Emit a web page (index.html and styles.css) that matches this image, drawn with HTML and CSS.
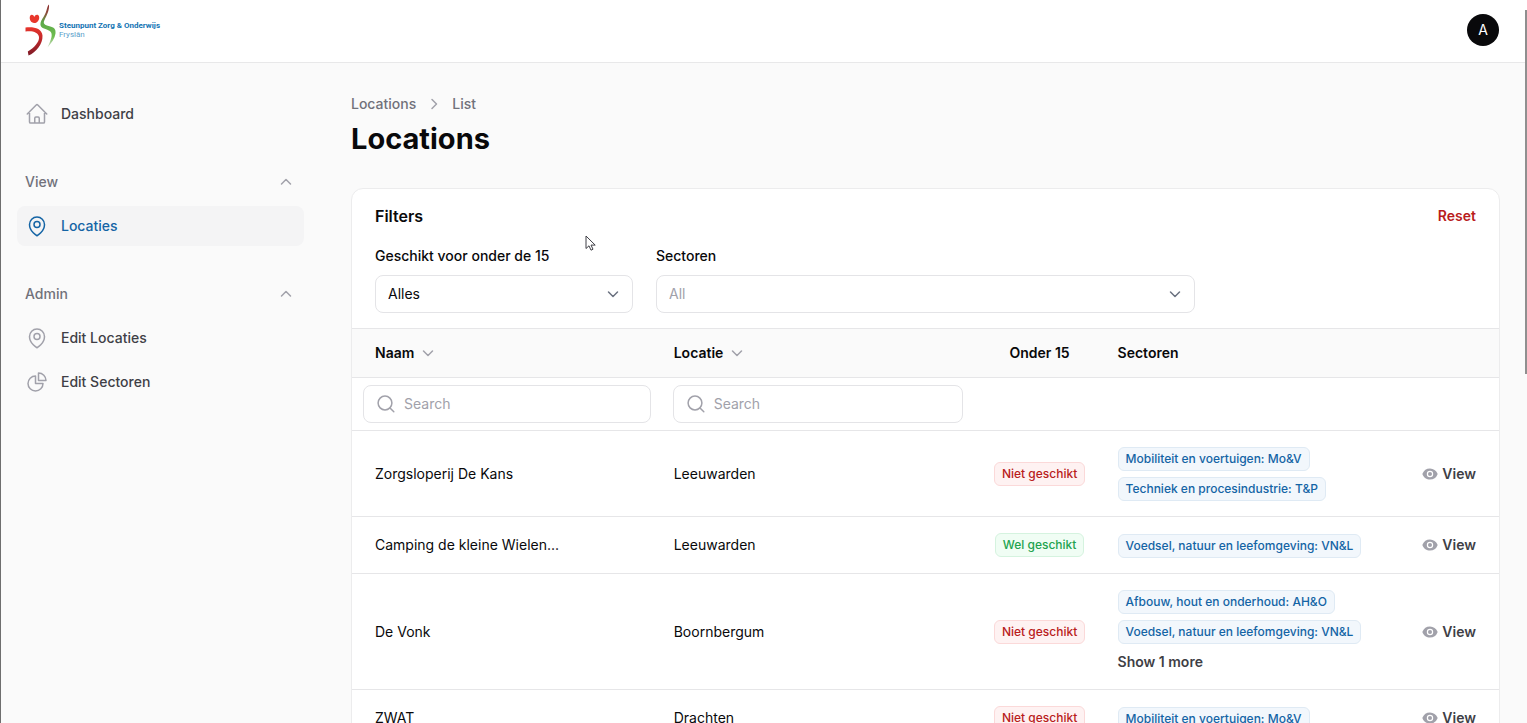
FILE: index.html
```html
<!DOCTYPE html>
<html lang="nl">
<head>
<meta charset="utf-8">
<meta name="viewport" content="width=device-width, initial-scale=1">
<title>Locations</title>
<link rel="stylesheet" href="styles.css">
</head>
<body>
<svg class="sprite" aria-hidden="true">
  <symbol id="home" viewBox="0 0 24 24"><path d="m2.25 12 8.954-8.955c.44-.439 1.152-.439 1.591 0L21.75 12M4.5 9.75v10.125c0 .621.504 1.125 1.125 1.125H9.75v-4.875c0-.621.504-1.125 1.125-1.125h2.25c.621 0 1.125.504 1.125 1.125V21h4.125c.621 0 1.125-.504 1.125-1.125V9.75M8.25 21h8.25"/></symbol>
  <symbol id="pin" viewBox="0 0 24 24"><path d="M15 10.5a3 3 0 1 1-6 0 3 3 0 0 1 6 0Z"/><path d="M19.5 10.5c0 7.142-7.5 11.25-7.5 11.25S4.5 17.642 4.5 10.5a7.5 7.5 0 1 1 15 0Z"/></symbol>
  <symbol id="pie" viewBox="0 0 24 24"><path d="M10.5 6a7.5 7.5 0 1 0 7.5 7.5h-7.5V6Z"/><path d="M13.5 10.5H21A7.5 7.5 0 0 0 13.5 3v7.5Z"/></symbol>
  <symbol id="up" viewBox="0 0 20 20"><path d="m5.5 12 4.5-4.5 4.5 4.500"/></symbol>
  <symbol id="down" viewBox="0 0 20 20"><path d="m5.5 8 4.5 4.5L14.500 8"/></symbol>
  <symbol id="right" viewBox="0 0 20 20"><path d="m8 5.500 4.500 4.500L8 14.500"/></symbol>
  <symbol id="search" viewBox="0 0 20 20"><circle cx="9" cy="9" r="6.900"/><path d="m14 14 3.800 3.800"/></symbol>
  <symbol id="eye" viewBox="0 0 20 20"><path d="M10 12.500a2.500 2.500 0 1 0 0-5 2.500 2.500 0 0 0 0 5Z"/><path fill-rule="evenodd" d="M.664 10.590a1.651 1.651 0 0 1 0-1.186A10.004 10.004 0 0 1 10 3c4.257 0 7.893 2.660 9.336 6.410.147.381.146.804 0 1.186A10.004 10.004 0 0 1 10 17c-4.257 0-7.893-2.660-9.336-6.410ZM14 10a4 4 0 1 1-8 0 4 4 0 0 1 8 0Z" clip-rule="evenodd"/></symbol>
</svg>

<header class="topbar">
  <a class="logo" href="#">
    <svg class="logo-mark" viewBox="0 0 32 54" aria-hidden="true">
      <defs>
        <linearGradient id="green" x1="0" y1="0" x2="0" y2="1"><stop offset="0" stop-color="#8c2a2c"/><stop offset=".2" stop-color="#8c4a3a"/><stop offset=".4" stop-color="#5da84a"/><stop offset=".75" stop-color="#6fbe4f"/><stop offset="1" stop-color="#d5ddd0"/></linearGradient>
        <linearGradient id="red" x1="0" y1="0" x2="0" y2="1"><stop offset="0" stop-color="#e8352c"/><stop offset=".4" stop-color="#c2292b"/><stop offset="1" stop-color="#7d1a26"/></linearGradient>
      </defs>
      <path fill="url(#green)" d="M24 1.500C21.800 3 22.500 8 18.500 14c-3.800 5.500-4.500 9.700.5 11.500 6 2 8.500 3.300 7.500 8.500-.9 4-2.500 7-4 10.500 4-4.500 7.200-9 8-14 .5-4.500-1.500-6.200-6-7.200-5-1.200-6.800-2.600-5-6.300C22 12 24.500 7 24 1.500Z"/>
      <path fill="#e8372c" d="M5 13c1.200-2 3.400-1.600 4.300 1 1-2.600 3.600-2.800 4.700-.8 1 3.300-1.500 6.900-4.800 6.800-3.200-.1-5.200-3.500-4.200-7Z"/>
      <path fill="url(#red)" d="M.5 24.500C8 23.500 17 25 17.500 32.500 18 41 11 49.500 3.500 52.500L2.800 48.500C9 45 14.500 39 14 34 13.500 29 7 27.500.5 28.500Z"/>
    </svg>
    <span class="logo-text"><b>Steunpunt Zorg &amp; Onderwijs</b><span>Fryslân</span></span>
  </a>
  <button class="avatar" type="button" aria-label="Account">A</button>
</header>

<div class="layout">
  <nav class="sidebar">
    <a class="nav-item" href="#"><svg class="icon"><use href="#home"/></svg>Dashboard</a>
    <section class="nav-group">
      <button class="group-head" type="button">View<svg class="chevron"><use href="#up"/></svg></button>
      <a class="nav-item active" href="#" aria-current="page"><svg class="icon"><use href="#pin"/></svg>Locaties</a>
    </section>
    <section class="nav-group">
      <button class="group-head" type="button">Admin<svg class="chevron"><use href="#up"/></svg></button>
      <a class="nav-item" href="#"><svg class="icon"><use href="#pin"/></svg>Edit Locaties</a>
      <a class="nav-item" href="#"><svg class="icon"><use href="#pie"/></svg>Edit Sectoren</a>
    </section>
  </nav>

  <main class="main">
    <div class="breadcrumbs"><a href="#">Locations</a><svg class="chevron"><use href="#right"/></svg><span>List</span></div>
    <h1>Locations</h1>

    <div class="card">
      <form class="filters">
        <div class="filters-head"><h2>Filters</h2><button class="reset" type="button">Reset</button></div>
        <div class="filter-grid">
          <div class="field">
            <label for="under15">Geschikt voor onder de 15</label>
            <div class="select"><select id="under15"><option>Alles</option></select><svg class="chevron"><use href="#down"/></svg></div>
          </div>
          <div class="field wide">
            <label for="sectors">Sectoren</label>
            <div class="select empty"><select id="sectors"><option>All</option></select><svg class="chevron"><use href="#down"/></svg></div>
          </div>
        </div>
      </form>

      <table>
        <colgroup><col class="col-name"><col class="col-place"><col class="col-age"><col><col class="col-action"></colgroup>
        <thead>
          <tr>
            <th><button class="sort" type="button">Naam<svg class="chevron"><use href="#down"/></svg></button></th>
            <th><button class="sort" type="button">Locatie<svg class="chevron"><use href="#down"/></svg></button></th>
            <th class="center">Onder 15</th><th>Sectoren</th><th></th>
          </tr>
          <tr class="search-row">
            <td><div class="search"><svg><use href="#search"/></svg><input type="search" placeholder="Search" aria-label="Search Naam"></div></td>
            <td><div class="search"><svg><use href="#search"/></svg><input type="search" placeholder="Search" aria-label="Search Locatie"></div></td>
            <td></td><td></td><td></td>
          </tr>
        </thead>
        <tbody>
          <tr>
            <td>Zorgsloperij De Kans</td><td>Leeuwarden</td>
            <td class="center"><span class="badge no">Niet geschikt</span></td>
            <td class="tags"><div class="stack"><span class="badge">Mobiliteit en voertuigen: Mo&amp;V</span><span class="badge">Techniek en procesindustrie: T&amp;P</span></div></td>
            <td class="action"><a class="view" href="#"><svg><use href="#eye"/></svg>View</a></td>
          </tr>
          <tr>
            <td>Camping de kleine Wielen...</td><td>Leeuwarden</td>
            <td class="center"><span class="badge yes">Wel geschikt</span></td>
            <td class="tags"><div class="stack"><span class="badge">Voedsel, natuur en leefomgeving: VN&amp;L</span></div></td>
            <td class="action"><a class="view" href="#"><svg><use href="#eye"/></svg>View</a></td>
          </tr>
          <tr>
            <td>De Vonk</td><td>Boornbergum</td>
            <td class="center"><span class="badge no">Niet geschikt</span></td>
            <td class="tags"><div class="stack"><span class="badge">Afbouw, hout en onderhoud: AH&amp;O</span><span class="badge">Voedsel, natuur en leefomgeving: VN&amp;L</span><button class="more" type="button">Show 1 more</button></div></td>
            <td class="action"><a class="view" href="#"><svg><use href="#eye"/></svg>View</a></td>
          </tr>
          <tr>
            <td>ZWAT</td><td>Drachten</td>
            <td class="center"><span class="badge no">Niet geschikt</span></td>
            <td class="tags"><div class="stack"><span class="badge">Mobiliteit en voertuigen: Mo&amp;V</span></div></td>
            <td class="action"><a class="view" href="#"><svg><use href="#eye"/></svg>View</a></td>
          </tr>
        </tbody>
      </table>
    </div>
  </main>
</div>
<div class="scroll-thumb"></div>
<svg class="pointer" viewBox="0 0 12 17" aria-hidden="true"><path d="M1 1v12.500l3-2.700 2 4.400 2-1-2-4.100h4.200Z"/></svg>
</body>
</html>
```
FILE: styles.css
```css
* { box-sizing: border-box; }
body {
  margin: 0;
  height: 100vh;
  overflow: hidden;
  border-left: 1px solid #6e6e6e;
  background: #fafafa;
  color: #09090b;
  font: 400 14px/20px Inter, "Liberation Sans", sans-serif;
}
a { color: inherit; text-decoration: none; }
button, input, select { font: inherit; color: inherit; margin: 0; }
button { padding: 0; border: 0; background: none; }
svg { flex: none; }
.sprite { position: absolute; width: 0; height: 0; }

.topbar {
  display: flex;
  align-items: center;
  justify-content: space-between;
  height: 63px;
  padding: 0 28px 3px 24px;
  background: #fff;
  border-bottom: 1px solid #e8e8e9;
}
.logo { display: flex; align-items: center; gap: 2px; }
.logo-mark { width: 32px; height: 54px; }
.logo-text {
  display: flex;
  flex-direction: column;
  font: 400 8px/9px Roboto, sans-serif;
  color: #5b9fcb;
}
.logo-text b { color: #1273b3; font-weight: 700; }
.avatar {
  width: 32px;
  height: 32px;
  border-radius: 50%;
  background: #09090b;
  color: #fff;
}

.layout { display: flex; align-items: flex-start; }
.sidebar { flex: none; width: 303px; padding: 31px 0 0 16px; }
.nav-item {
  display: flex;
  align-items: center;
  gap: 12px;
  height: 40px;
  padding: 0 8px;
  border-radius: 8px;
  color: #3f3f46;
  font-weight: 500;
}
.nav-item + .nav-item { margin-top: 4px; }
.nav-item.active { background: #f4f4f5; color: #1464a5; }
.icon { width: 24px; height: 24px; fill: none; stroke: #a1a1aa; stroke-width: 1.5; stroke-linecap: round; stroke-linejoin: round; }
.active .icon { stroke: #1464a5; }
.nav-group { margin-top: 36px; }
.group-head {
  display: flex;
  align-items: center;
  justify-content: space-between;
  width: 100%;
  height: 24px;
  margin-bottom: 12px;
  padding: 0 8px;
  color: #71717a;
  font-weight: 500;
}
.chevron { width: 20px; height: 20px; fill: none; stroke: #a1a1aa; stroke-width: 1.5; stroke-linecap: round; stroke-linejoin: round; }

.main { flex: 1; min-width: 0; padding: 32px 27px 0 47px; }
.breadcrumbs { display: flex; align-items: center; gap: 8px; height: 18px; color: #71717a; font-weight: 500; }
h1 { margin: 8px 0 31px; font-size: 29px; line-height: 36px; font-weight: 700; }
.card { overflow: hidden; border: 1px solid #ececed; border-radius: 12px; background: #fff; }
.filters { padding: 15px 23px; }
.filters-head { display: flex; justify-content: space-between; align-items: center; height: 24px; margin-bottom: 16px; }
h2 { margin: 0; font-size: 16px; line-height: 24px; font-weight: 600; }
.reset { color: #b91c1c; font-weight: 600; }
.filter-grid { display: grid; grid-template-columns: repeat(4, 1fr); gap: 23px; }
.wide { grid-column: span 2; }
.field label { display: block; margin-bottom: 7px; line-height: 24px; font-weight: 500; }
.select, .search {
  display: flex;
  align-items: center;
  height: 38px;
  border: 1px solid #e4e4e7;
  border-radius: 8px;
  background: #fff;
}
.select { position: relative; }
.select select { width: 100%; height: 100%; padding: 0 36px 0 12px; border: 0; background: none; appearance: none; }
.select.empty select { color: #a1a1aa; }
.select .chevron { position: absolute; right: 9px; pointer-events: none; stroke: #6b7280; }

table { width: 100%; border-collapse: separate; border-spacing: 0; table-layout: fixed; }
.col-name { width: 27%; }
.col-place { width: 27.2%; }
.col-age { width: 11.5%; }
.col-action { width: 95px; }
th, td { padding: 18px 12px; text-align: left; vertical-align: middle; border-top: 1px solid #e6e6e8; }
th { height: 49px; padding: 0 12px; background: #fafafa; font-weight: 600; }
th:first-child, td:first-child { padding-left: 23px; }
.search-row td, .search-row td:first-child { padding: 7px 11px; }
.sort { display: flex; align-items: center; gap: 4px; font-weight: 600; }
th.center, td.center { padding: 0; text-align: center; }
.search { gap: 8px; padding: 0 12px; }
.search svg { width: 20px; height: 20px; fill: none; stroke: #a1a1aa; stroke-width: 1.5; stroke-linecap: round; }
.search input { flex: 1; min-width: 0; padding: 0; border: 0; outline: 0; background: none; }
.search input::placeholder { color: #a1a1aa; opacity: 1; }
td.tags { padding: 16px 12px 15px; }
td.center { line-height: 0; }
.stack { display: flex; flex-direction: column; align-items: flex-start; gap: 6px; }
.badge {
  display: inline-block;
  height: 24px;
  padding: 0 7px;
  border: 1px solid #dfeaf4;
  border-radius: 6px;
  background: #f2f7fc;
  color: #1464a5;
  font-size: 12px;
  line-height: 22px;
  font-weight: 500;
  white-space: nowrap;
}
.badge.no { border-color: #fbd9d9; background: #fef2f2; color: #b91c1c; }
.badge.yes { border-color: #d5f3df; background: #f0fdf4; color: #22a34f; }
.more { height: 24px; color: #3f3f46; font-weight: 600; }
td.action { padding: 0 23px 0 0; }
.view { display: flex; align-items: center; justify-content: flex-end; gap: 4px; color: #3f3f46; font-weight: 600; }
.view svg { width: 16px; height: 16px; fill: #a1a1aa; }

.scroll-thumb { position: absolute; top: 10px; right: 0; width: 2px; height: 364px; background: #8f8f8f; }
.pointer { position: absolute; left: 585px; top: 235px; width: 12px; height: 17px; fill: #fff; stroke: #3f3f46; stroke-width: 1; }
```
